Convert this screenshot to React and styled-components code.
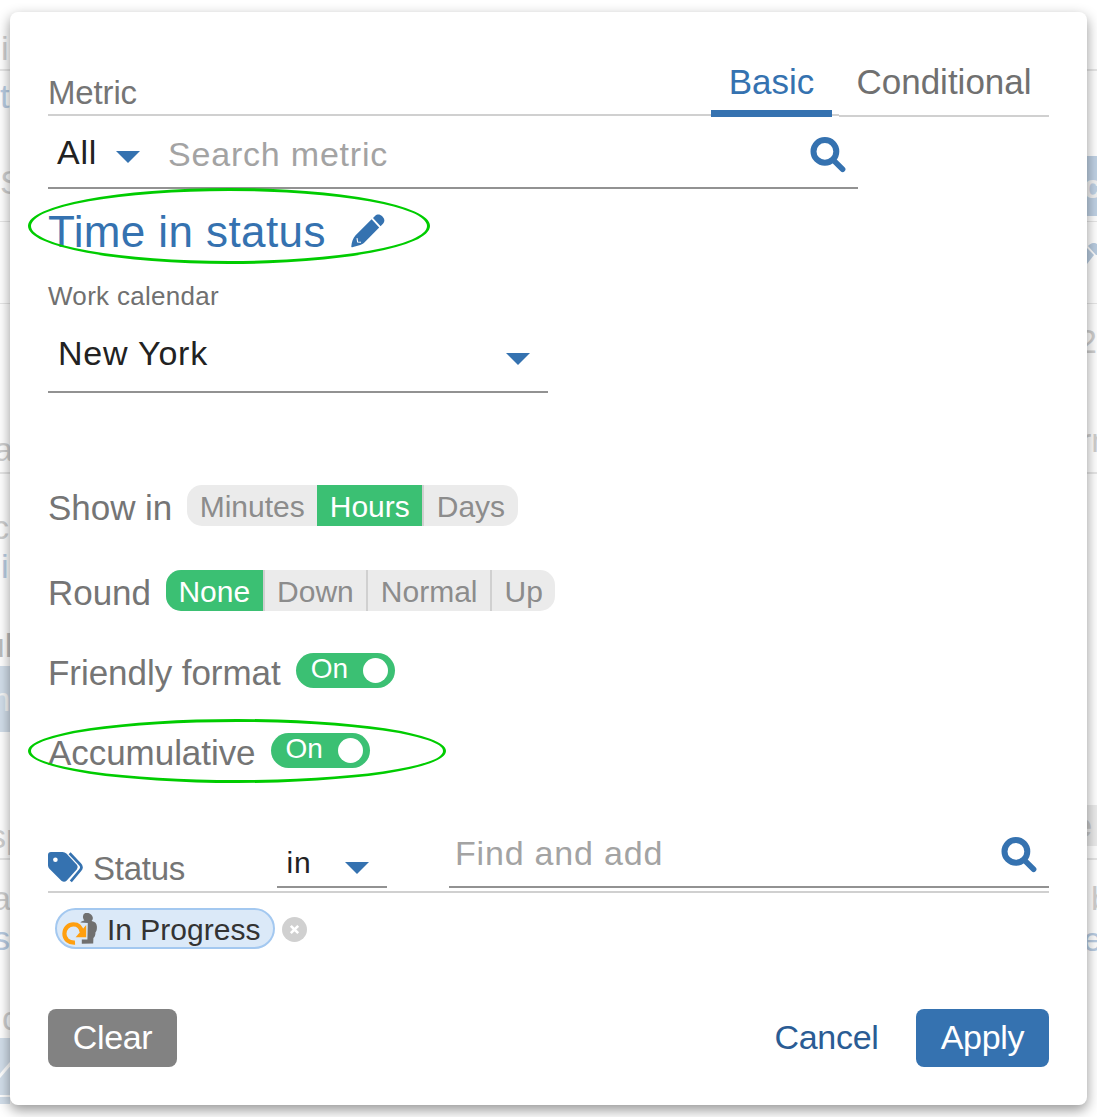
import { useState } from "react";
import styled, { createGlobalStyle } from "styled-components";

const GlobalStyle = createGlobalStyle`
  * {
    box-sizing: border-box;
  }
  body {
    margin: 0;
    background: #fff;
    font-family: "Liberation Sans", Arial, sans-serif;
  }
  button, input {
    font-family: inherit;
  }
`;

const Page = styled.div`
  display: grid;
  grid-template-columns: 10px 1077px 10px;
  width: 1097px;
  height: 1117px;
  overflow: hidden;
`;

// strips of the report page that show beside the dialog
const Strip = styled.div`
  overflow: hidden;
`;

const Mark = styled.div`
  margin-top: ${(p) => p.$gap}px;
  height: ${(p) => p.$h}px;
  line-height: ${(p) => p.$h}px;
  padding-left: ${(p) => p.$x || 0}px;
  text-indent: ${(p) => p.$pull || 0}px;
  background: ${(p) => p.$bg || "transparent"};
  color: ${(p) => p.$color || "#cfcfcf"};
  font-size: 34px;
  font-weight: ${(p) => (p.$bold ? "bold" : "normal")};
  white-space: nowrap;
  overflow: hidden;
  svg {
    display: block;
  }
`;

const Dialog = styled.div`
  position: relative;
  z-index: 1;
  margin-top: 12px;
  height: 1093px;
  padding: 0 38px;
  background: #fff;
  border-radius: 8px;
  box-shadow: 0 5px 13px rgba(0, 0, 0, 0.42);
`;

const Header = styled.div`
  display: flex;
  justify-content: space-between;
  align-items: flex-end;
  height: 104px;
  border-bottom: 2px solid #d0d0d0;
`;

const HeaderLabel = styled.div`
  color: #757575;
  font-size: 33px;
  letter-spacing: -0.15px;
  line-height: 43px;
`;

const Tabs = styled.div`
  display: flex;
  gap: 7px;
  margin-bottom: -3px;
`;

const Tab = styled.button`
  height: 72px;
  width: ${(p) => p.$w}px;
  padding: ${(p) => (p.$active ? 8 : 3)}px 0 0;
  border: none;
  border-bottom: ${(p) => (p.$active ? "7px solid #3572b0" : "2px solid #d0d0d0")};
  background: #fff;
  color: ${(p) => (p.$active ? "#3572b0" : "#707070")};
  font-size: 35px;
`;

const SearchRow = styled.div`
  display: flex;
  align-items: center;
  width: 810px;
  height: 73px;
  padding: 0 12px 0 9px;
  border-bottom: 2px solid #929292;
  > svg {
    margin-top: 6px;
  }
`;

const SelectText = styled.span`
  color: #222;
  font-size: ${(p) => p.$size || 34}px;
  letter-spacing: ${(p) => p.$ls || 0}px;
  line-height: 40px;
`;

const Caret = styled.span`
  width: 0;
  height: 0;
  border-left: 12px solid transparent;
  border-right: 12px solid transparent;
  border-top: 12px solid #3572b0;
`;

const AllSelect = styled.div`
  display: flex;
  align-items: center;
  justify-content: space-between;
  width: 83px;
  margin-right: 28px;
  ${Caret} {
    margin-top: 10px;
  }
`;

const SearchInput = styled.input`
  flex: 1;
  min-width: 0;
  height: 40px;
  padding: 0;
  margin-top: ${(p) => p.$drop || 0}px;
  border: none;
  outline: none;
  background: none;
  font-size: 34px;
  letter-spacing: 0.8px;
  &::placeholder {
    color: #a3a3a3;
    opacity: 1;
  }
`;

const TitleRow = styled.div`
  position: relative;
  display: flex;
  align-items: center;
  gap: 25px;
  height: 86px;
  color: #3572b0;
  font-size: 44px;
  letter-spacing: 0.4px;
  > svg {
    margin-top: -2px;
  }
`;

const Ring = styled.div`
  position: absolute;
  left: -20px;
  top: ${(p) => p.$top}px;
  width: ${(p) => p.$w}px;
  height: ${(p) => p.$h}px;
  border: 3px solid #00cc00;
  border-radius: 50%;
  pointer-events: none;
`;

const SmallLabel = styled.div`
  height: 42px;
  line-height: 42px;
  color: #707070;
  font-size: 26px;
  letter-spacing: 0.3px;
`;

const CalendarSelect = styled.div`
  display: flex;
  align-items: center;
  justify-content: space-between;
  width: 500px;
  height: 76px;
  padding: 0 18px 2px 10px;
  border-bottom: 2px solid #929292;
  ${Caret} {
    margin-top: 11px;
  }
`;

const OptionRow = styled.div`
  position: relative;
  display: flex;
  align-items: center;
  gap: 15px;
  height: ${(p) => p.$h}px;
  margin-top: ${(p) => p.$gap}px;
`;

const OptionLabel = styled.span`
  padding-top: 5px;
  color: #757575;
  font-size: 35px;
  letter-spacing: -0.05px;
  line-height: 40px;
`;

const Segments = styled.div`
  display: flex;
  height: 41px;
  border-radius: 15px;
  background: #ebebeb;
  overflow: hidden;
`;

const Segment = styled.button`
  padding: 2px 12.5px 0;
  border: none;
  border-left: ${(p) => (p.$divider ? "2px solid #d0d0d0" : "none")};
  background: ${(p) => (p.$active ? "#3bc073" : "transparent")};
  color: ${(p) => (p.$active ? "#fff" : "#8c8c8c")};
  font-size: 30px;
`;

const Switch = styled.button`
  display: flex;
  align-items: center;
  justify-content: space-between;
  flex-direction: ${(p) => (p.$on ? "row" : "row-reverse")};
  width: 99px;
  height: 35px;
  padding: 0 7px 0 15px;
  border: none;
  border-radius: 18px;
  background: ${(p) => (p.$on ? "#3bc073" : "#bbb")};
  color: #fff;
  font-size: 28px;
  line-height: 31px;
  span {
    padding-bottom: 4px;
  }
`;

const Knob = styled.i`
  width: 25px;
  height: 25px;
  border-radius: 50%;
  background: #fff;
`;

const FilterRow = styled.div`
  display: flex;
  align-items: flex-end;
  height: 73px;
  margin-top: 52px;
  border-bottom: 2px solid #d0d0d0;
`;

const FilterName = styled.div`
  display: flex;
  align-items: center;
  gap: 9px;
  width: 229px;
  height: 45px;
  color: #757575;
  font-size: 33px;
  letter-spacing: -0.25px;
  svg {
    margin-top: -2px;
  }
`;

const OperatorSelect = styled.div`
  display: flex;
  align-items: center;
  justify-content: space-between;
  width: 110px;
  height: 49px;
  margin: 0 62px 3px 0;
  padding: 0 18px 0 9.5px;
  border-bottom: 2px solid #929292;
  ${Caret} {
    margin-top: 11px;
  }
`;

const FindField = styled.div`
  display: flex;
  align-items: center;
  flex: 1;
  height: 68px;
  margin-bottom: 3px;
  padding: 0 12px 0 6px;
  border-bottom: 2px solid #929292;
  > svg {
    margin-top: 3px;
  }
`;

const ChipRow = styled.div`
  display: flex;
  align-items: center;
  gap: 7px;
  margin: 15px 0 0 7px;
`;

const Chip = styled.div`
  display: flex;
  align-items: center;
  gap: 9px;
  width: 220px;
  height: 41px;
  padding: 2px 0 0 5px;
  border: 2px solid #a3c8f0;
  border-radius: 21px;
  background: #dbe9f8;
  color: #333;
  font-size: 30px;
  white-space: nowrap;
`;

const RemoveButton = styled.button`
  width: 25px;
  height: 25px;
  padding: 0;
  margin-top: 2px;
  border: none;
  border-radius: 50%;
  background: #d0d0d0;
  svg {
    display: block;
  }
`;

const Footer = styled.div`
  display: flex;
  align-items: center;
  margin-top: 60px;
`;

const Button = styled.button`
  height: 58px;
  padding: 0 24px 2px;
  border: none;
  border-radius: 8px;
  background: ${(p) => p.$bg || "transparent"};
  color: ${(p) => p.$color || "#fff"};
  width: ${(p) => p.$w}px;
  font-size: 34px;
  letter-spacing: -0.3px;
`;

const CancelButton = styled(Button)`
  margin-left: auto;
  margin-right: 13px;
`;

const SearchIcon = () => (
  <svg width="36" height="36" viewBox="0 0 36 36" fill="none" stroke="#3572b0">
    <circle cx="14.9" cy="14.4" r="11.4" strokeWidth="6" />
    <path d="M23.5 23.3 L32.6 32.2" strokeWidth="5.6" strokeLinecap="round" />
  </svg>
);

const PencilIcon = () => (
  <svg width="34" height="34" viewBox="0 0 34 34" fill="#3572b0">
    <path d="M20.6 5.2 L28.2 13.6 L13.4 28.6 C12 30 10 30.9 7.5 31.6 L1.2 33.3 C.5 33.5 .2 33.1 .3 32.5 C.6 28.5 1.8 24.6 4.6 21.3 Z" />
    <path d="M22 3.9 L24 1.9 C26 -.1 29 0 31 2 L32 3.2 C33.8 5.2 33.8 7.5 32.2 9.4 L29.6 12.2 Z" />
    <path d="M6 24.2 L6.6 28 L10 28.2" fill="none" stroke="#fff" strokeWidth="1.1" />
  </svg>
);

const TagsIcon = () => (
  <svg width="36" height="32" viewBox="0 0 36 32">
    <path
      d="M3 0 H14.5 Q16.8 0 18.4 1.6 L28.6 12.6 Q30.6 15 28.7 17.4 L18.8 28.6 Q16.2 31 13.4 28.8 L1.4 16.8 Q0 15.3 0 13.2 V3 Q0 0 3 0 Z"
      fill="#3572b0"
    />
    <circle cx="7.4" cy="7.8" r="2.3" fill="#fff" />
    <path
      d="M21.6 1.2 L32 12.2 Q34.8 15.2 32.2 18.2 L22.8 29.4"
      fill="none"
      stroke="#3572b0"
      strokeWidth="2.7"
    />
  </svg>
);

const ProgressIcon = () => (
  <svg width="36" height="34" viewBox="0 0 36 34">
    <path
      d="M21 3.4 C21.4 .4 23.4 -.4 25.2 -.2 C28 0 30.4 2 30.8 4.4 C31 6 30.4 7 29.6 8 C33 8.6 34.8 10.4 34.9 13.6 C35 16.4 34.6 18 33.4 19.6 C33.6 22.4 32.6 24 31.4 25 L31.2 30.6 L19.8 30.8 L19.8 26.6 L25.4 26.4 L25.8 10 L18.4 9.6 C19 8.2 21 7.6 22.4 7.4 C21.4 6.4 20.8 5 21 3.4 Z"
      fill="#707070"
    />
    <path
      d="M13 29.6 C6.6 30 2.4 26 2.4 20.8 C2.4 15.2 6.6 11.3 11.4 11.3 C15.8 11.3 19 14 19.6 19"
      fill="none"
      stroke="#ff9f0f"
      strokeWidth="4.2"
    />
    <path d="M24.2 12 L24.2 24.2 L13.6 24.2 Z" fill="#ff9f0f" />
  </svg>
);

const leftMarks = [
  { gap: 28, h: 40, x: 1, text: "ip" },
  { gap: 1, h: 2, bg: "#e6e6e6" },
  { gap: 5, h: 40, text: "t", color: "#b9cce2" },
  { gap: 48, h: 36, x: 0, text: "S" },
  { gap: 21, h: 1, bg: "#e6e6e6" },
  { gap: 81, h: 1, bg: "#e6e6e6" },
  { gap: 125, h: 40, pull: -6, text: "a" },
  { gap: 3, h: 2, bg: "#e6e6e6" },
  { gap: 33, h: 40, pull: -8, text: "c" },
  { gap: 0, h: 38, x: 1, text: "i", color: "#b9cce2" },
  { gap: 41, h: 38, pull: -16, text: "ul", bold: true, color: "#bdbdbd" },
  { gap: 2, h: 66, pull: -18, text: "m", bg: "#d2deea", color: "#f6f6f6" },
  { gap: 84, h: 40, pull: -11, text: "sp" },
  { gap: 2, h: 2, bg: "#e6e6e6" },
  { gap: 18, h: 40, pull: -8, text: "a" },
  { gap: 0, h: 40, pull: -7, text: "s", color: "#b9cce2" },
  { gap: 40, h: 40, x: 2, text: "c" },
  { gap: 0, h: 66, bg: "#d2deea", chart: true },
];

const rightMarks = [
  { gap: 69, h: 2, bg: "#e6e6e6" },
  { gap: 85, h: 60, pull: -4, text: "c", bg: "#bfd1e4", color: "#f2f2f2", bold: true },
  { gap: 5, h: 1, bg: "#e6e6e6" },
  { gap: 21, h: 24, pencil: true },
  { gap: 36, h: 1, bg: "#e6e6e6" },
  { gap: 17, h: 40, pull: -9, text: "20" },
  { gap: 59, h: 40, pull: -7, text: "rm" },
  { gap: 12, h: 2, bg: "#e6e6e6" },
  { gap: 331, h: 41, pull: -14, text: "e", bg: "#ebebeb", color: "#c8c8c8", bold: true },
  { gap: 12, h: 2, bg: "#e6e6e6" },
  { gap: 18, h: 40, x: 4, text: "b" },
  { gap: 0, h: 42, pull: -4, text: "er", color: "#b9cce2" },
];

const MarkStrip = ({ marks }) => (
  <Strip>
    {marks.map((m, i) => (
      <Mark
        key={i}
        $gap={m.gap}
        $h={m.h}
        $x={m.x}
        $pull={m.pull}
        $bg={m.bg}
        $color={m.color}
        $bold={m.bold}
      >
        {m.text}
        {m.chart && (
          <svg width="10" height="66" stroke="#fff" fill="none">
            <path d="M-1 39 L11 25" strokeWidth="3" />
            <path d="M0 58 L10 58" strokeWidth="2" />
          </svg>
        )}
        {m.pencil && (
          <svg width="10" height="24" fill="#b9cce0">
            <path d="M0 5 L7 12 L0 21 Z" />
            <path d="M1 3 C4 0 7 -1 10 1 L10 12 L9 12 Z" />
          </svg>
        )}
      </Mark>
    ))}
  </Strip>
);

const SegmentedControl = ({ options, value, onChange }) => {
  const active = options.indexOf(value);
  return (
    <Segments>
      {options.map((option, i) => (
        <Segment
          key={option}
          $active={i === active}
          $divider={i > 0 && i !== active}
          onClick={() => onChange(option)}
        >
          {option}
        </Segment>
      ))}
    </Segments>
  );
};

const Toggle = ({ on, onChange }) => (
  <Switch $on={on} onClick={() => onChange(!on)}>
    <span>{on ? "On" : "Off"}</span>
    <Knob />
  </Switch>
);

const App = () => {
  const [tab, setTab] = useState("Basic");
  const [unit, setUnit] = useState("Hours");
  const [round, setRound] = useState("None");
  const [friendly, setFriendly] = useState(true);
  const [accumulative, setAccumulative] = useState(true);

  return (
    <Page>
      <GlobalStyle />
      <MarkStrip marks={leftMarks} />
      <Dialog>
        <Header>
          <HeaderLabel>Metric</HeaderLabel>
          <Tabs>
            <Tab $w={121} $active={tab === "Basic"} onClick={() => setTab("Basic")}>
              Basic
            </Tab>
            <Tab
              $w={210}
              $active={tab === "Conditional"}
              onClick={() => setTab("Conditional")}
            >
              Conditional
            </Tab>
          </Tabs>
        </Header>

        <SearchRow>
          <AllSelect>
            <SelectText $ls={0.8}>All</SelectText>
            <Caret />
          </AllSelect>
          <SearchInput $drop={5} placeholder="Search metric" />
          <SearchIcon />
        </SearchRow>

        <TitleRow>
          Time in status
          <PencilIcon />
          <Ring $top={-1} $w={402} $h={76} />
        </TitleRow>

        <SmallLabel>Work calendar</SmallLabel>
        <CalendarSelect>
          <SelectText $ls={0.8}>New York</SelectText>
          <Caret />
        </CalendarSelect>

        <OptionRow $gap={92} $h={41}>
          <OptionLabel>Show in</OptionLabel>
          <SegmentedControl
            options={["Minutes", "Hours", "Days"]}
            value={unit}
            onChange={setUnit}
          />
        </OptionRow>
        <OptionRow $gap={44} $h={41}>
          <OptionLabel>Round</OptionLabel>
          <SegmentedControl
            options={["None", "Down", "Normal", "Up"]}
            value={round}
            onChange={setRound}
          />
        </OptionRow>
        <OptionRow $gap={42} $h={35}>
          <OptionLabel>Friendly format</OptionLabel>
          <Toggle on={friendly} onChange={setFriendly} />
        </OptionRow>
        <OptionRow $gap={45} $h={35}>
          <OptionLabel>Accumulative</OptionLabel>
          <Toggle on={accumulative} onChange={setAccumulative} />
          <Ring $top={-14} $w={418} $h={64} />
        </OptionRow>

        <FilterRow>
          <FilterName>
            <TagsIcon />
            Status
          </FilterName>
          <OperatorSelect>
            <SelectText $size={30} $ls={0.8}>in</SelectText>
            <Caret />
          </OperatorSelect>
          <FindField>
            <SearchInput placeholder="Find and add" />
            <SearchIcon />
          </FindField>
        </FilterRow>

        <ChipRow>
          <Chip>
            <ProgressIcon />
            In Progress
          </Chip>
          <RemoveButton>
            <svg width="25" height="25" stroke="#fff" strokeWidth="2.6">
              <path d="M8.8 8.8 L16.2 16.2 M16.2 8.8 L8.8 16.2" />
            </svg>
          </RemoveButton>
        </ChipRow>

        <Footer>
          <Button $w={129} $bg="#828282">Clear</Button>
          <CancelButton $w={153} $color="#2a5c94">Cancel</CancelButton>
          <Button $w={133} $bg="#3572b0">Apply</Button>
        </Footer>
      </Dialog>
      <MarkStrip marks={rightMarks} />
    </Page>
  );
};

export default App;
